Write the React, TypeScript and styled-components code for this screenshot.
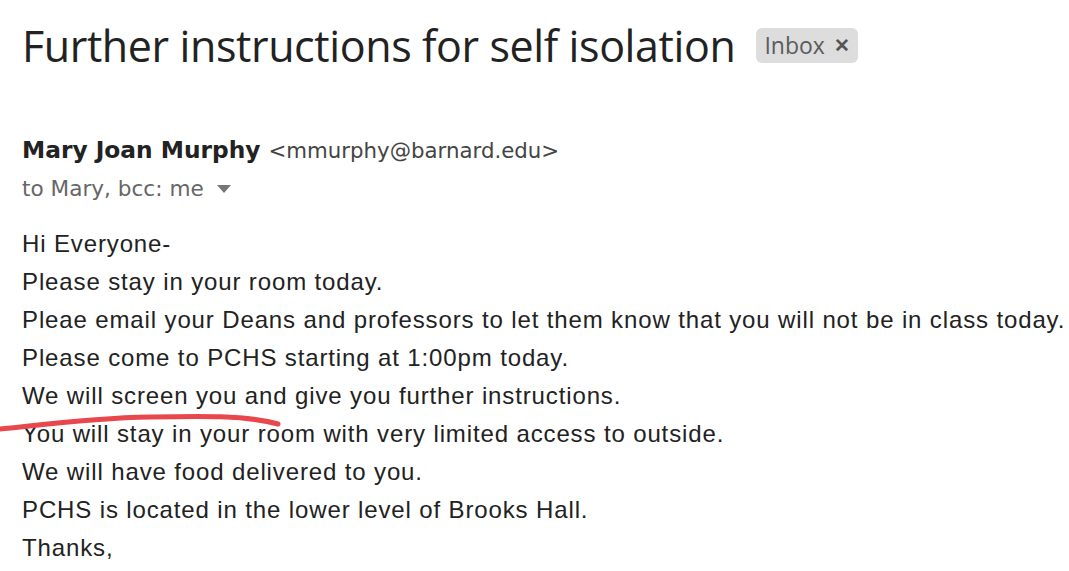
import React from "react";
import styled, { createGlobalStyle } from "styled-components";

const Global = createGlobalStyle`
  html, body { margin: 0; padding: 0; background: #fff; }
  body { width: 1069px; height: 571px; overflow: hidden; }
`;

const Page = styled.div`
  position: relative;
  padding: 19px 0 0 22px;
  display: flex;
  flex-direction: column;
`;

const SubjectRow = styled.div`
  display: flex;
  align-items: center;
  gap: 21px;
  height: 52px;
`;

const Subject = styled.h1`
  margin: 0;
  font-family: "Open Sans", sans-serif;
  font-weight: 400;
  font-size: 43px;
  letter-spacing: -0.4px;
  color: #222;
  white-space: nowrap;
`;

const Chip = styled.span`
  display: inline-flex;
  align-items: center;
  gap: 9px;
  height: 35px;
  padding: 0 8px 0 8px;
  border-radius: 6px;
  background: #dddddd;
  font-family: "Open Sans", sans-serif;
  font-size: 23px;
  color: #5b5b5b;
`;

const ChipX = styled.span`
  font-size: 19px;
  color: #555;
  font-weight: 600;
`;

const Header = styled.div`
  margin-top: 65px;
  display: flex;
  flex-direction: column;
  font-family: "DejaVu Sans", Roboto, sans-serif;
`;

const SenderLine = styled.div`
  display: flex;
  align-items: baseline;
  gap: 8px;
  height: 34px;
`;

const Name = styled.span`
  font-weight: 700;
  font-size: 23.3px;
  color: #222;
`;

const Email = styled.span`
  font-size: 21.3px;
  color: #444;
`;

const ToLine = styled.div`
  display: flex;
  align-items: center;
  gap: 13px;
  margin-top: 4px;
  font-size: 21.6px;
  color: #666;
  height: 28px;
`;

const Caret = styled.span`
  width: 0;
  height: 0;
  border-left: 7px solid transparent;
  border-right: 7px solid transparent;
  border-top: 8px solid #777;
  margin-top: 2px;
`;

const Body = styled.div`
  margin-top: 23px;
  font-family: "Liberation Sans", Arial, sans-serif;
  font-size: 24px;
  letter-spacing: 0.87px;
  color: #222;
  display: flex;
  flex-direction: column;
`;

const Line = styled.div`
  height: 38px;
  line-height: 38px;
  white-space: nowrap;
`;

const Scribble = styled.svg`
  position: absolute;
  left: 0;
  top: 410px;
  pointer-events: none;
`;

const lines = [
  "Hi Everyone-",
  "Please stay in your room today.",
  "Pleae email your Deans and professors to let them know that you will not be in class today.",
  "Please come to PCHS starting at 1:00pm today.",
  "We will screen you and give you further instructions.",
  "You will stay in your room with very limited access to outside.",
  "We will have food delivered to you.",
  "PCHS is located in the lower level of Brooks Hall.",
  "Thanks,",
];

export default function App() {
  return (
    <>
      <Global />
      <Page>
        <SubjectRow>
          <Subject>Further instructions for self isolation</Subject>
          <Chip>
            Inbox<ChipX>✕</ChipX>
          </Chip>
        </SubjectRow>
        <Header>
          <SenderLine>
            <Name>Mary Joan Murphy</Name>
            <Email>&lt;mmurphy@barnard.edu&gt;</Email>
          </SenderLine>
          <ToLine>
            to Mary, bcc: me <Caret />
          </ToLine>
        </Header>
        <Body>
          {lines.map((l) => (
            <Line key={l}>{l}</Line>
          ))}
        </Body>
        <Scribble width="300" height="30" viewBox="0 0 300 30">
          <path
            d="M0 19 C 40 15, 90 8, 150 7 C 200 6, 245 5, 278 14"
            fill="none"
            stroke="#e8474c"
            strokeWidth="5"
            strokeLinecap="round"
          />
        </Scribble>
      </Page>
    </>
  );
}
